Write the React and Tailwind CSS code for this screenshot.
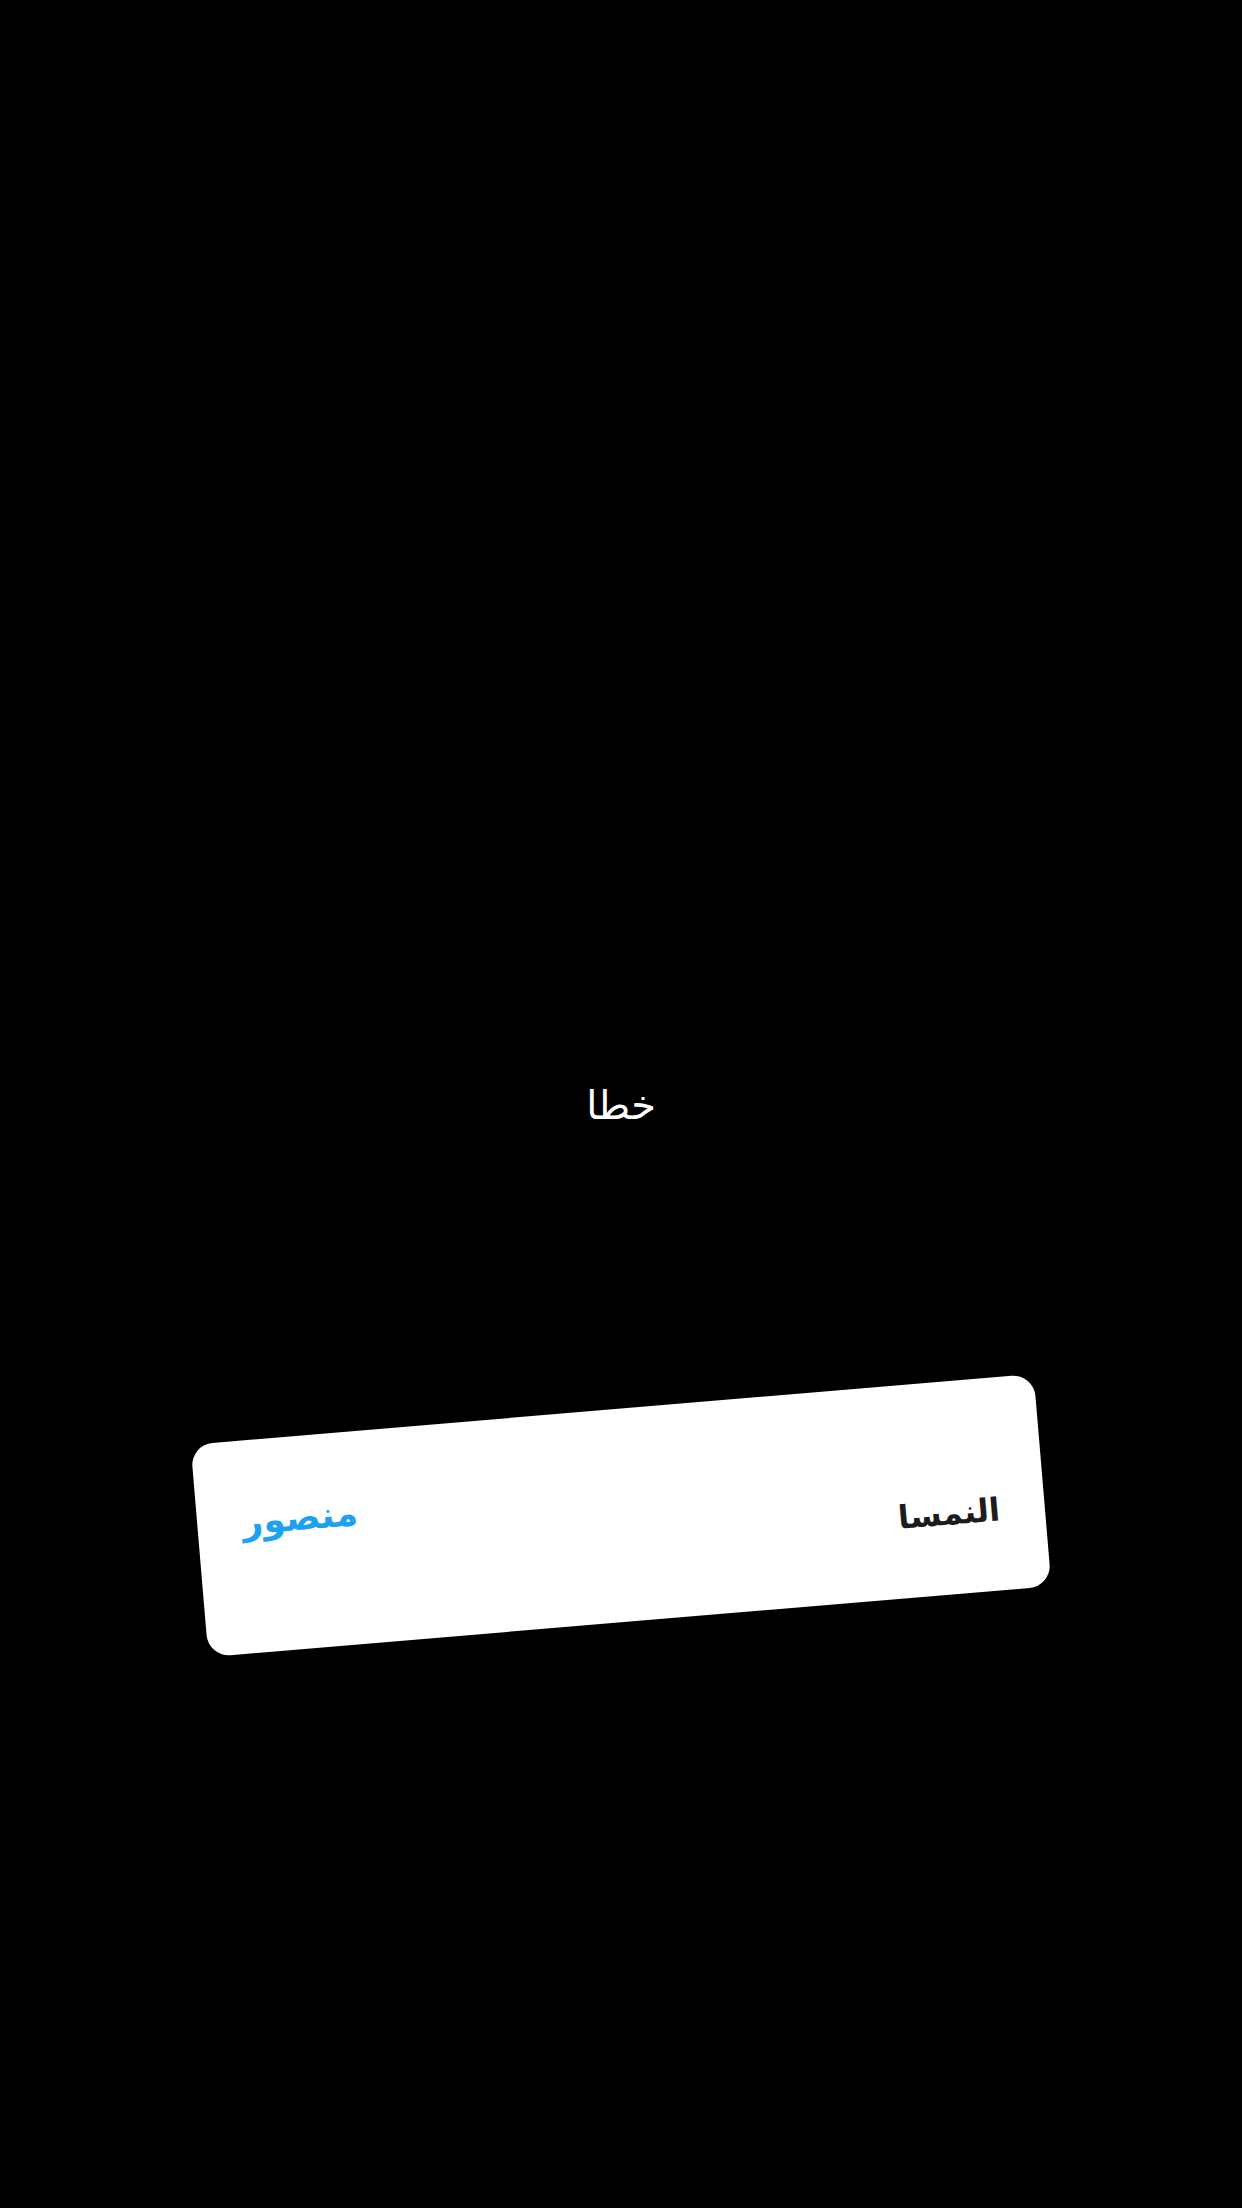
export default function App() {
  return (
    <div
      className="flex h-[2208px] w-full flex-col items-center bg-black"
      style={{ fontFamily: '"DejaVu Sans", sans-serif' }}
    >
      <p className="mt-[1085px] text-[40px] leading-none text-white">خطا</p>

      <div
        dir="rtl"
        className="mt-[284px] flex h-[213px] w-[846px] -rotate-[4.8deg] justify-between rounded-[22px] bg-white px-[45px]"
      >
        <span className="mt-[116px] text-[32px] font-bold leading-none text-[#1c1c1e]">
          النمسا
        </span>
        <span className="mt-[64px] text-[36px] font-bold leading-none text-[#1da1f2]">
          منصور
        </span>
      </div>
    </div>
  );
}
